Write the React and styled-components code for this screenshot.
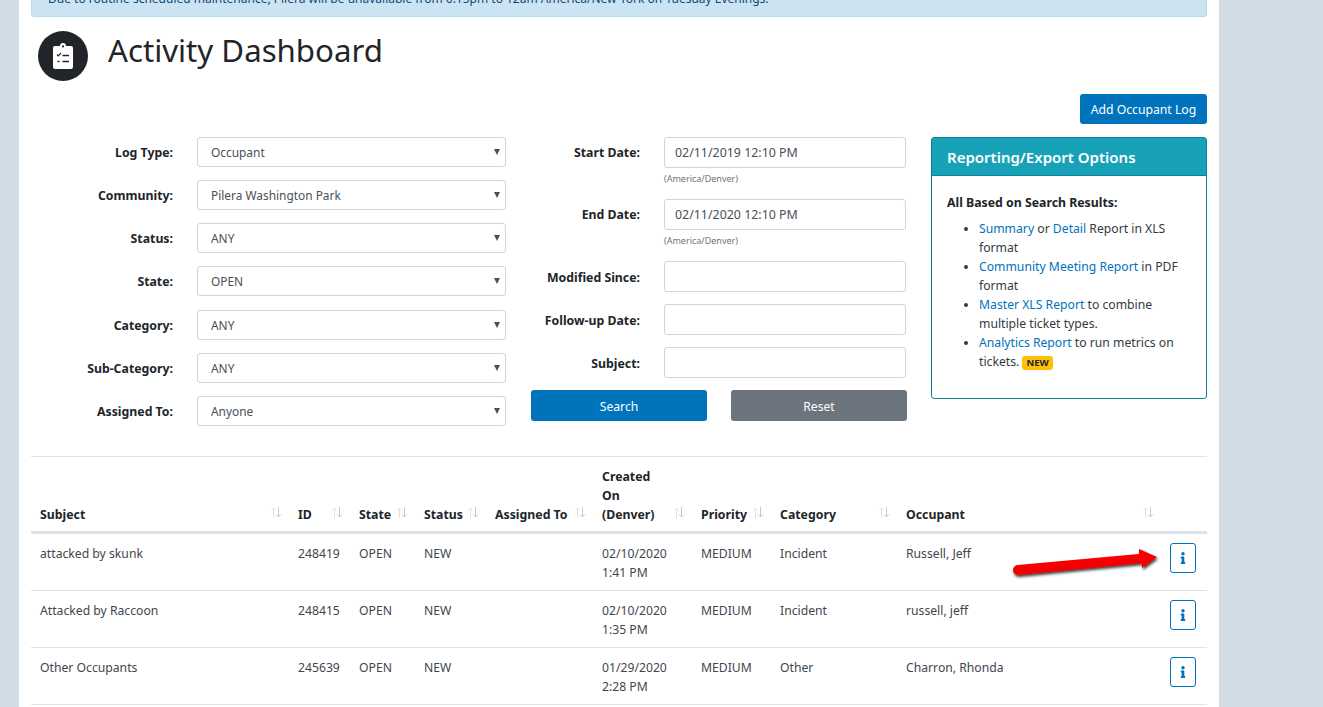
import React from "react"
import styled, { createGlobalStyle } from "styled-components"
import { FaInfo } from "react-icons/fa"

const GlobalStyle = createGlobalStyle`
    html, body {
        margin: 0;
        height: 100%;
        overflow: hidden;
        background: #d1dce5;
    }
    body, input, select, button, table {
        font-family: "Noto Sans", "Open Sans", sans-serif;
        font-size: 12.2px;
        line-height: 19px;
        color: #212529;
    }
    * { box-sizing: border-box; }
`

const Panel = styled.div`
    margin-left: 19px;
    width: 1200px;
    height: 707px;
    padding: 0 12px;
    background: #fff;
    overflow: hidden;
`

const Alert = styled.div`
    margin-top: -22px;
    height: 39px;
    padding: 10px 16px;
    background: #cce3f1;
    border: 1px solid #b8daf0;
    border-radius: 3px;
    color: #0c4a75;
    font-size: 12px;
`

const TitleRow = styled.div`
    display: flex;
    align-items: center;
    gap: 20px;
    margin: 14px 0 0 7px;
    height: 50px;
`

const TitleBadge = styled.div`
    width: 50px;
    height: 50px;
    border-radius: 50%;
    background: #212529;
    display: flex;
    align-items: center;
    justify-content: center;
`

const Title = styled.h1`
    margin: 0 0 12px;
    font-size: 31.2px;
    line-height: 40px;
    font-weight: 400;
`

const ActionRow = styled.div`
    display: flex;
    justify-content: flex-end;
    margin-top: 13px;
`

const Button = styled.button`
    display: block;
    height: ${props => props.tall ? '31px' : '30px'};
    width: ${props => props.wide ? '176px' : '127px'};
    padding: 1px 0 0;
    border: none;
    border-radius: 3px;
    background: ${props => props.secondary ? '#6c757d' : '#0073bd'};
    color: #fff;
`

const FilterGrid = styled.div`
    display: grid;
    grid-template-columns: 476px 376px 276px;
    column-gap: 24px;
    margin-top: 13px;
`

const FieldColumn = styled.div`
    display: flex;
    flex-direction: column;
    gap: ${props => props.gap}px;
`

const Field = styled.div`
    display: flex;
    align-items: ${props => props.top ? 'flex-start' : 'center'};
    gap: 24px;
`

const Label = styled.label`
    flex: 0 0 ${props => props.width}px;
    padding-top: ${props => props.top ? '0' : '1px'};
    text-align: right;
    font-size: 12.3px;
    font-weight: 700;
    line-height: ${props => props.top ? '31px' : '19px'};
`

const SelectWrap = styled.div`
    position: relative;
    width: 309px;
    &::after {
        content: "";
        position: absolute;
        right: 6px;
        top: 12px;
        border-left: 3px solid transparent;
        border-right: 3px solid transparent;
        border-top: 6px solid #495057;
    }
`

const Select = styled.select`
    display: block;
    width: 100%;
    height: 30px;
    padding: 1px 13px 0;
    appearance: none;
    background: #fff;
    border: 1px solid #ced4da;
    border-radius: 3px;
    color: #495057;
    font-size: 11.9px;
`

const DateStack = styled.div`
    display: flex;
    flex-direction: column;
`

const Input = styled.input`
    display: block;
    width: 242px;
    height: 31px;
    padding: 0 10px;
    background: #fff;
    border: 1px solid #ced4da;
    border-radius: 3px;
    color: #495057;
    font-size: 12.4px;
`

const Hint = styled.small`
    height: 19px;
    padding-top: 3px;
    font-size: 9px;
    line-height: 15px;
    color: #6c757d;
`

const ButtonRow = styled.div`
    display: flex;
    gap: 24px;
`

const Card = styled.div`
    align-self: start;
    height: 262px;
    border: 1px solid #0f8299;
    border-radius: 3px;
`

const CardHeader = styled.div`
    height: 38px;
    padding: 0 15px;
    background: #17a2b8;
    color: #fff;
    font-size: 15px;
    font-weight: 600;
    line-height: 38px;
    border-bottom: 1px solid #0f8299;
`

const CardBody = styled.div`
    padding: 17px 15px;
    b { display: block; margin-bottom: 7px; font-size: 12.3px; }
`

const ReportList = styled.ul`
    margin: 0;
    padding-left: 32px;
    color: #343a40;
`

const Link = styled.a`
    color: #0073bd;
`

const NewBadge = styled.span`
    display: inline-block;
    padding: 0 4px;
    background: #ffc107;
    border-radius: 3px;
    font-size: 9.5px;
    font-weight: 700;
    line-height: 14px;
    color: #212529;
    vertical-align: 0;
`

const TableWrap = styled.div`
    position: relative;
    margin-top: 30px;
`

const Table = styled.table`
    width: 1176px;
    table-layout: fixed;
    border-collapse: collapse;
    border-top: 1px solid #dee2e6;
`

const Th = styled.th`
    padding: 10px 7px 7px 9px;
    border-bottom: 3px solid #dee2e6;
    text-align: left;
    vertical-align: bottom;
    font-size: 12.3px;
    font-weight: 700;
`

const HeadCell = styled.div`
    display: flex;
    justify-content: space-between;
    align-items: flex-end;
`

const SortIcon = styled.svg`
    flex: none;
    margin-bottom: 6px;
`

const Td = styled.td`
    height: 57px;
    padding: 10px 9px 8px;
    border-bottom: 1px solid #dee2e6;
    vertical-align: top;
    color: #3f464d;
`

const InfoButton = styled.button`
    display: flex;
    align-items: center;
    justify-content: center;
    width: 26px;
    height: 30px;
    margin: -1px 0 0;
    padding: 0;
    background: #fff;
    border: 1px solid #0073bd;
    border-radius: 3px;
    color: #0073bd;
`

const Arrow = styled.svg`
    position: absolute;
    left: 980px;
    top: 90px;
    pointer-events: none;
`

const columns = [
    { width: 258, title: "Subject" },
    { width: 61, title: "ID" },
    { width: 65, title: "State" },
    { width: 71, title: "Status" },
    { width: 107, title: "Assigned To" },
    { width: 99, title: <>Created<br />On<br />(Denver)</> },
    { width: 79, title: "Priority" },
    { width: 126, title: "Category" },
    { width: 264, title: "Occupant" },
    { width: 46 },
]

const rows = [
    ["attacked by skunk", "248419", "02/10/2020", "1:41 PM", "Incident", "Russell, Jeff"],
    ["Attacked by Raccoon", "248415", "02/10/2020", "1:35 PM", "Incident", "russell, jeff"],
    ["Other Occupants", "245639", "01/29/2020", "2:28 PM", "Other", "Charron, Rhonda"],
]

const selects = [
    ["Log Type:", "Occupant"],
    ["Community:", "Pilera Washington Park"],
    ["Status:", "ANY"],
    ["State:", "OPEN"],
    ["Category:", "ANY"],
    ["Sub-Category:", "ANY"],
    ["Assigned To:", "Anyone"],
]

const ClipboardIcon = () => (
    <svg width="20" height="26" viewBox="0 0 20 26">
        <path fill="#fff" d="M2 3h5a3 3 0 0 1 6 0h5a2 2 0 0 1 2 2v19a2 2 0 0 1-2 2H2a2 2 0 0 1-2-2V5a2 2 0 0 1 2-2z" />
        <circle cx="10" cy="3.4" r="1.1" fill="#212529" />
        <path fill="none" stroke="#212529" strokeWidth="1.2" d="M4 11.5l1.3 1.3L8 10" />
        <path fill="none" stroke="#212529" strokeWidth="1.5" d="M9.5 12.5h6.5M9.5 18.5h6.5M4.5 18.5h2" />
    </svg>
)

const SortArrows = () => (
    <SortIcon width="12" height="11" viewBox="0 0 12 11" fill="none" strokeWidth="1">
        <path stroke="#dfe2e5" d="M3.5 11V1M1 3.5L3.5 1L6 3.5" />
        <path stroke="#c4c8cc" d="M8.5 0V10M6 7.5L8.5 10L11 7.5" />
    </SortIcon>
)

const RedArrow = () => (
    <Arrow width="160" height="42" viewBox="0 0 160 42">
        <defs>
            <filter id="arrowShadow" x="-10%" y="-40%" width="120%" height="200%">
                <feDropShadow dx="1" dy="2" stdDeviation="1.5" floodColor="#000" floodOpacity="0.8" />
            </filter>
        </defs>
        <path
            fill="#f50000"
            filter="url(#arrowShadow)"
            d="M7 19L128 8L128 3L146 11L131 22L131 17L7 29A5 5 0 0 1 7 19z"
        />
    </Arrow>
)

const App = () => {
    return (
        <Panel>
            <GlobalStyle />
            <Alert>Due to routine scheduled maintenance, Pilera will be unavailable from 6:15pm to 12am America/New York on Tuesday Evenings.</Alert>
            <TitleRow>
                <TitleBadge><ClipboardIcon /></TitleBadge>
                <Title>Activity Dashboard</Title>
            </TitleRow>
            <ActionRow><Button>Add Occupant Log</Button></ActionRow>
            <FilterGrid>
                <FieldColumn gap={13.17}>
                    {selects.map(([label, value]) => (
                        <Field key={label}>
                            <Label width={142}>{label}</Label>
                            <SelectWrap>
                                <Select defaultValue={value}><option>{value}</option></Select>
                            </SelectWrap>
                        </Field>
                    ))}
                </FieldColumn>
                <FieldColumn gap={12}>
                    <Field top>
                        <Label top width={109}>Start Date:</Label>
                        <DateStack>
                            <Input defaultValue="02/11/2019 12:10 PM" />
                            <Hint>(America/Denver)</Hint>
                        </DateStack>
                    </Field>
                    <Field top>
                        <Label top width={109}>End Date:</Label>
                        <DateStack>
                            <Input defaultValue="02/11/2020 12:10 PM" />
                            <Hint>(America/Denver)</Hint>
                        </DateStack>
                    </Field>
                    <Field><Label width={109}>Modified Since:</Label><Input /></Field>
                    <Field><Label width={109}>Follow-up Date:</Label><Input /></Field>
                    <Field><Label width={109}>Subject:</Label><Input /></Field>
                    <ButtonRow>
                        <Button wide tall>Search</Button>
                        <Button wide tall secondary>Reset</Button>
                    </ButtonRow>
                </FieldColumn>
                <Card>
                    <CardHeader>Reporting/Export Options</CardHeader>
                    <CardBody>
                        <b>All Based on Search Results:</b>
                        <ReportList>
                            <li><Link>Summary</Link> or <Link>Detail</Link> Report in XLS format</li>
                            <li><Link>Community Meeting Report</Link> in PDF format</li>
                            <li><Link>Master XLS Report</Link> to combine multiple ticket types.</li>
                            <li><Link>Analytics Report</Link> to run metrics on tickets. <NewBadge>NEW</NewBadge></li>
                        </ReportList>
                    </CardBody>
                </Card>
            </FilterGrid>
            <TableWrap>
                <Table>
                    <colgroup>
                        {columns.map((col, i) => <col key={i} width={col.width} />)}
                    </colgroup>
                    <thead>
                        <tr>
                            {columns.map((col, i) => (
                                <Th key={i}>
                                    {col.title && (
                                        <HeadCell>
                                            <span>{col.title}</span>
                                            <SortArrows />
                                        </HeadCell>
                                    )}
                                </Th>
                            ))}
                        </tr>
                    </thead>
                    <tbody>
                        {rows.map(([subject, id, date, time, category, occupant]) => (
                            <tr key={id}>
                                <Td>{subject}</Td>
                                <Td>{id}</Td>
                                <Td>OPEN</Td>
                                <Td>NEW</Td>
                                <Td />
                                <Td>{date}<br />{time}</Td>
                                <Td>MEDIUM</Td>
                                <Td>{category}</Td>
                                <Td>{occupant}</Td>
                                <Td><InfoButton><FaInfo size={12} /></InfoButton></Td>
                            </tr>
                        ))}
                    </tbody>
                </Table>
                <RedArrow />
            </TableWrap>
        </Panel>
    )
}

export default App
